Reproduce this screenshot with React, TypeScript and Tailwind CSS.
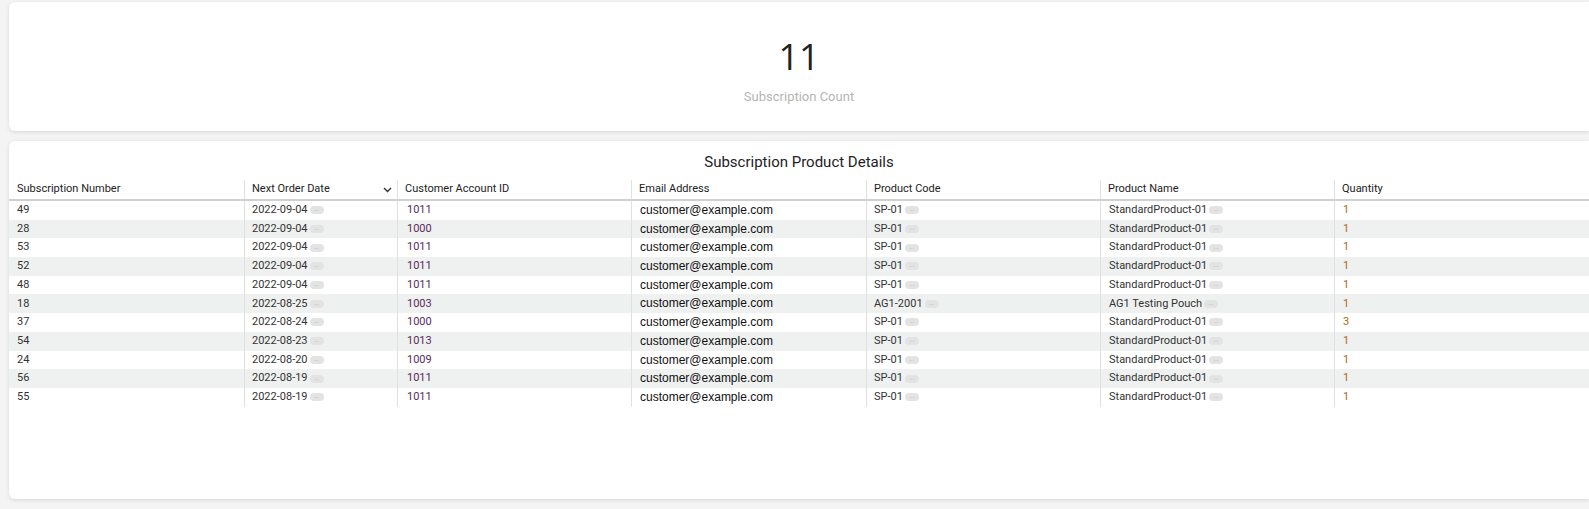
import React from "react";

const rows = [
  ["49","2022-09-04","1011","SP-01","StandardProduct-01","1"],
  ["28","2022-09-04","1000","SP-01","StandardProduct-01","1"],
  ["53","2022-09-04","1011","SP-01","StandardProduct-01","1"],
  ["52","2022-09-04","1011","SP-01","StandardProduct-01","1"],
  ["48","2022-09-04","1011","SP-01","StandardProduct-01","1"],
  ["18","2022-08-25","1003","AG1-2001","AG1 Testing Pouch","1"],
  ["37","2022-08-24","1000","SP-01","StandardProduct-01","3"],
  ["54","2022-08-23","1013","SP-01","StandardProduct-01","1"],
  ["24","2022-08-20","1009","SP-01","StandardProduct-01","1"],
  ["56","2022-08-19","1011","SP-01","StandardProduct-01","1"],
  ["55","2022-08-19","1011","SP-01","StandardProduct-01","1"],
];

const Pill = () => (
  <span className="ml-[2px] inline-flex h-[8px] w-[14px] items-center justify-center rounded-full bg-[#e3e3e3] align-middle text-[6px] leading-none text-[#999]">···</span>
);

const W = ["w-[235px]", "w-[153px]", "w-[234px]", "w-[235px]", "w-[234px]", "w-[234px]", "flex-1"];

export default function App() {
  return (
    <div className="h-[509px] w-[1589px] overflow-hidden bg-[#f4f4f4] pl-[9px] pt-[2px]" style={{ fontFamily: "Roboto, 'Liberation Sans', sans-serif" }}>
      <div className="flex h-[129px] flex-col items-center rounded-l-[6px] bg-white shadow-[0_1px_4px_rgba(0,0,0,0.12)]">
        <div className="mt-[33px] text-[36px] leading-[44px] text-[#222]" style={{ fontFamily: "'Open Sans', Roboto, sans-serif" }}>11</div>
        <div className="mt-[8px] text-[13px] text-[#b5b5b5]">Subscription Count</div>
      </div>
      <div className="mt-[10px] h-[358px] rounded-l-[6px] bg-white shadow-[0_1px_4px_rgba(0,0,0,0.12)]">
        <div className="pt-[12px] text-center text-[15px] leading-[18px] text-[#222]">Subscription Product Details</div>
        <div className="mt-[9px] flex h-[21px] items-center border-b-2 border-[#d0d0d0] text-[11px] text-[#222]">
          {["Subscription Number","Next Order Date","Customer Account ID","Email Address","Product Code","Product Name","Quantity"].map((h, i) => (
            <div key={h} className={`${W[i]} flex h-full shrink-0 items-center justify-between ${i ? "border-l border-[#e0e0e0] pl-[7px]" : "pl-[8px]"} pr-[5px]`}>
              <span>{h}</span>
              {i === 1 && (
                <svg width="9" height="6" viewBox="0 0 9 6"><path d="M1 1l3.5 3.5L8 1" fill="none" stroke="#333" strokeWidth="1.4" /></svg>
              )}
            </div>
          ))}
        </div>
        {rows.map((r, ri) => (
          <div key={ri} className={`flex h-[18.7px] items-center text-[11px] text-[#333] ${ri % 2 ? "bg-[#eff0f0]" : "bg-white"}`}>
            <div className={`${W[0]} shrink-0 pl-[8px]`}>{r[0]}</div>
            <div className={`${W[1]} flex h-full shrink-0 items-center border-l border-[#e0e0e0] pl-[7px]`}>{r[1]}<Pill /></div>
            <div className={`${W[2]} flex h-full shrink-0 items-center border-l border-[#e0e0e0] pl-[9px] text-[#5a2a5a]`}>{r[2]}</div>
            <div className={`${W[3]} flex h-full shrink-0 items-start border-l border-[#e0e0e0] pl-[8px] text-[12px] text-[#111]`} style={{ fontFamily: "'Liberation Sans', Arial, sans-serif" }}>customer@example.com</div>
            <div className={`${W[4]} flex h-full shrink-0 items-center border-l border-[#e0e0e0] pl-[7px]`}>{r[3]}<Pill /></div>
            <div className={`${W[5]} flex h-full shrink-0 items-center border-l border-[#e0e0e0] pl-[8px]`}>{r[4]}<Pill /></div>
            <div className={`${W[6]} flex h-full items-center border-l border-[#e0e0e0] pl-[8px] text-[#b06a10]`}>{r[5]}</div>
          </div>
        ))}
      </div>
    </div>
  );
}
